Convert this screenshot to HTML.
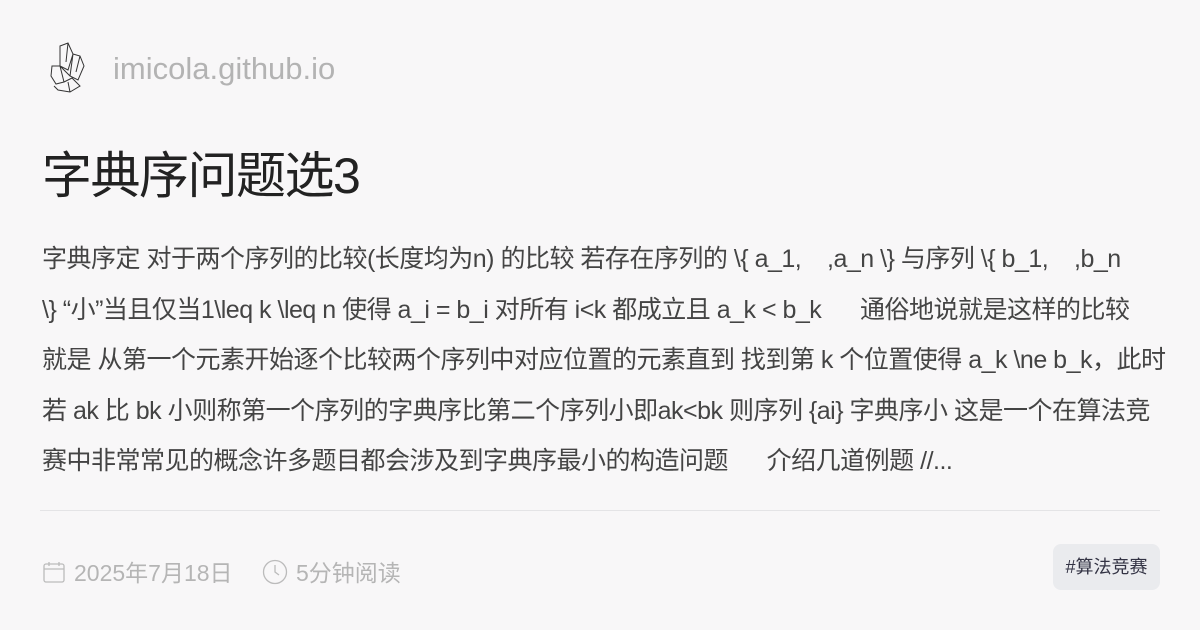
<!DOCTYPE html>
<html><head><meta charset="utf-8"><style>
body{margin:0;width:1200px;height:630px;background:#f8f7f8;font-family:"Liberation Sans","Noto Sans CJK SC",sans-serif;overflow:hidden;position:relative}
.site{position:absolute;left:113px;top:51px;font-size:31px;color:#b3b3b3}
.logo{position:absolute;left:48px;top:42px}
h1{position:absolute;left:42px;top:136px;margin:0;font-size:50px;font-weight:normal;color:#222;white-space:nowrap;letter-spacing:-1.5px}
.body{position:absolute;left:42px;top:234px;font-size:25px;line-height:50.5px;color:#444;white-space:nowrap;letter-spacing:-0.5px}
hr{position:absolute;left:40px;top:510px;width:1120px;margin:0;border:0;border-top:1px solid #e4e4e6}
.foot{position:absolute;top:554px;font-size:23px;color:#b5b5b5;white-space:nowrap}
.tag{position:absolute;left:1053px;top:544px;width:107px;height:46px;background:#eaebee;border-radius:8px;font-size:18px;color:#334;text-align:center;line-height:46px}
</style></head><body>
<svg class="logo" width="40" height="52" viewBox="0 0 40 52" fill="none" stroke="#333" stroke-width="1"><path d="M12 4 L20 1 L25 12 L20 28 L12 24 Z M20 1 L18 20 M25 12 L32 14 L36 24 L30 38 L22 34 Z M32 14 L28 30 M4 24 L12 24 L16 40 L8 42 L3 34 Z M16 40 L24 36 L32 44 L22 50 L10 48 L6 44 M12 24 L22 34 M22 50 L20 40"/></svg>
<div class="site">imicola.github.io</div>
<h1>字典序问题选3</h1>
<div class="body">字典序定 对于两个序列的比较(长度均为n) 的比较 若存在序列的 \{ a_1, &nbsp;&nbsp;&nbsp;,a_n \} 与序列 \{ b_1, &nbsp;&nbsp;&nbsp;,b_n<br>\} “小”当且仅当1\leq k \leq n 使得 a_i = b_i 对所有 i&lt;k 都成立且 a_k &lt; b_k &nbsp;&nbsp;&nbsp;&nbsp;&nbsp;通俗地说就是这样的比较<br>就是 从第一个元素开始逐个比较两个序列中对应位置的元素直到 找到第 k 个位置使得 a_k \ne b_k，此时<br>若 ak 比 bk 小则称第一个序列的字典序比第二个序列小即ak&lt;bk 则序列 {ai} 字典序小 这是一个在算法竞<br>赛中非常常见的概念许多题目都会涉及到字典序最小的构造问题 &nbsp;&nbsp;&nbsp;&nbsp;&nbsp;介绍几道例题 //...</div>
<hr>
<div class="foot" style="left:42px"><svg width="24" height="24" viewBox="0 0 24 24" fill="none" stroke="#bbb" stroke-width="1.3" style="vertical-align:-3px;margin-right:8px"><rect x="2" y="4" width="20" height="18" rx="2"/><path d="M2 9h20M7 2v4M17 2v4"/></svg>2025年7月18日</div>
<div class="foot" style="left:262px"><svg width="26" height="26" viewBox="0 0 26 26" fill="none" stroke="#bbb" stroke-width="1.3" style="vertical-align:-4px;margin-right:8px"><circle cx="13" cy="13" r="11.5"/><path d="M13 6v7l4 3"/></svg>5分钟阅读</div>
<div class="tag">#算法竞赛</div>
</body></html>
